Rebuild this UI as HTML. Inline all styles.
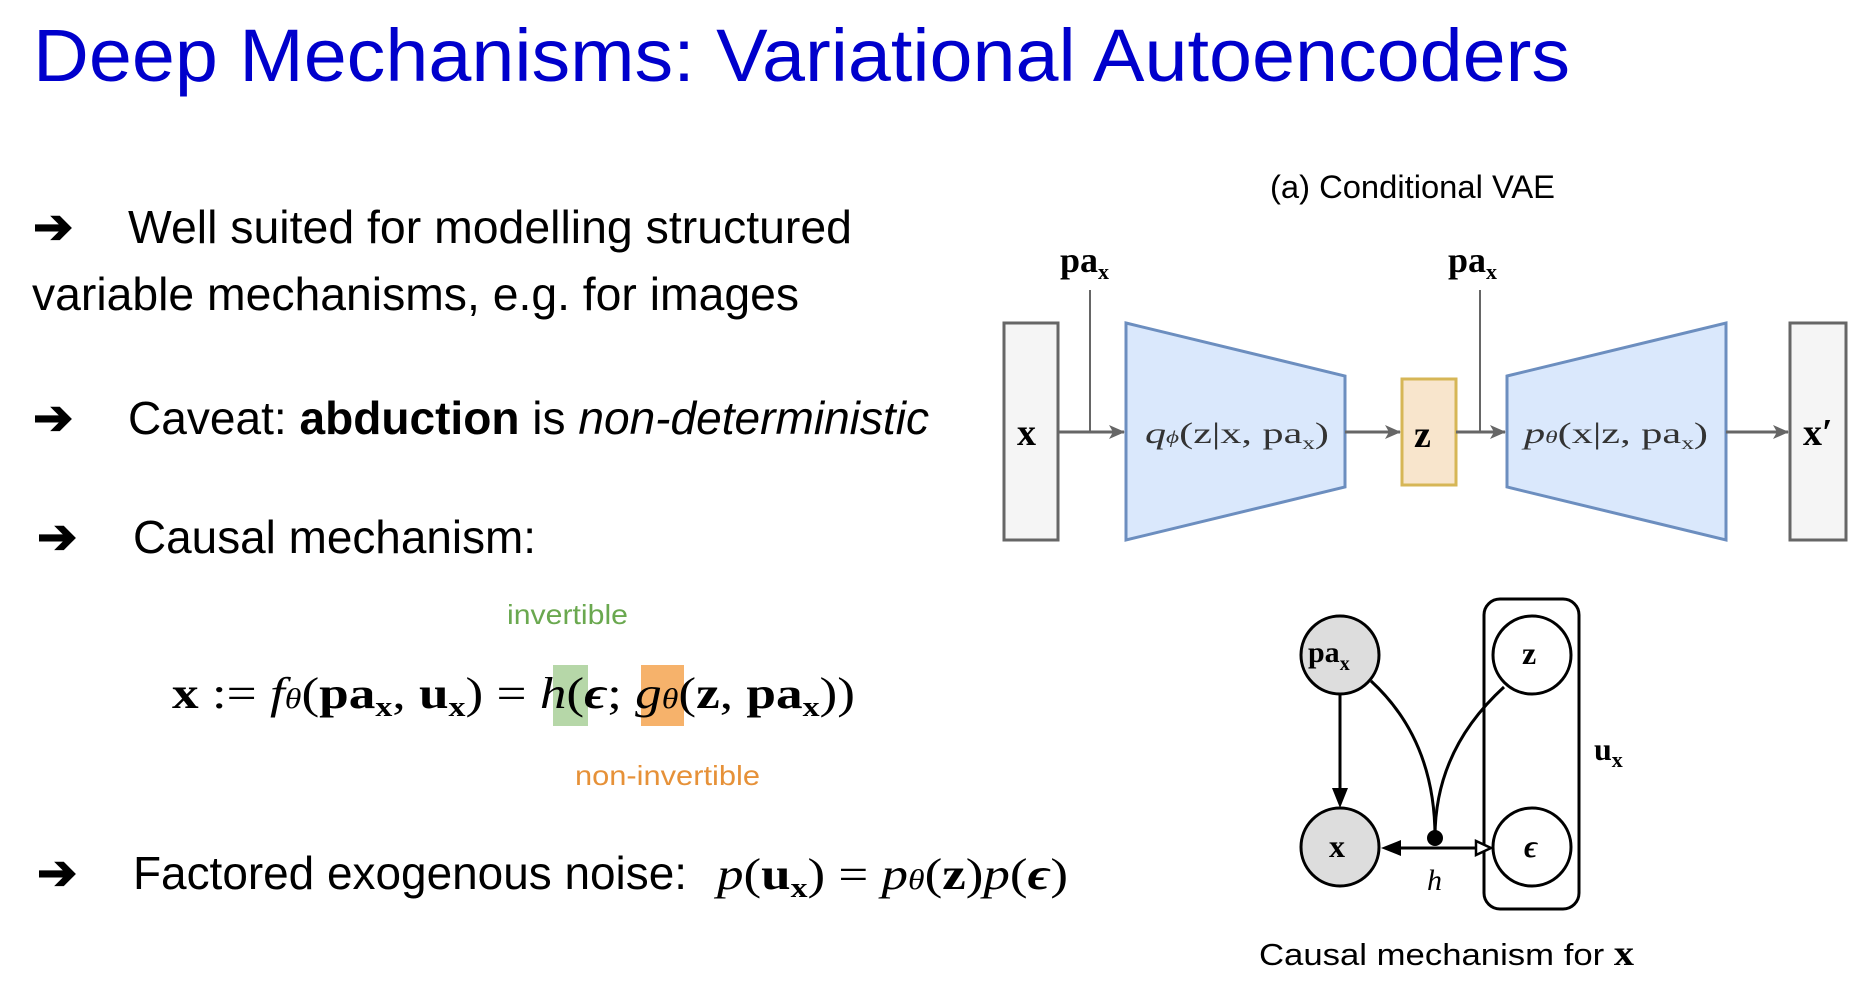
<!DOCTYPE html>
<html><head><meta charset="utf-8"><style>html,body{margin:0;padding:0;background:#fff}svg{display:block}</style></head>
<body>
<svg width="1856" height="990" viewBox="0 0 1856 990" xmlns="http://www.w3.org/2000/svg">
<defs>
<marker id="ag" markerWidth="16" markerHeight="16" refX="15" refY="8" orient="auto" markerUnits="userSpaceOnUse"><path d="M0,1 L16,8 L0,15 L4,8 z" fill="#666"/></marker>
</defs>
<g font-family="Liberation Sans, sans-serif">
<text x="33" y="81" font-size="74" fill="#0000cc" textLength="1537" lengthAdjust="spacingAndGlyphs">Deep Mechanisms: Variational Autoencoders</text>

<g font-size="46" fill="#000">
<text x="33" y="243" font-size="48" font-weight="bold">➔</text>
<text x="128" y="243" textLength="724" lengthAdjust="spacingAndGlyphs">Well suited for modelling structured</text>
<text x="32" y="310" textLength="767" lengthAdjust="spacingAndGlyphs">variable mechanisms, e.g. for images</text>
<text x="33" y="434" font-size="48" font-weight="bold">➔</text>
<text x="128" y="434" textLength="801" lengthAdjust="spacingAndGlyphs">Caveat: <tspan font-weight="bold">abduction</tspan> is <tspan font-style="italic">non-deterministic</tspan></text>
<text x="37" y="553" font-size="48" font-weight="bold">➔</text>
<text x="133" y="553" textLength="403" lengthAdjust="spacingAndGlyphs">Causal mechanism:</text>
<text x="37" y="889" font-size="48" font-weight="bold">➔</text>
<text x="133" y="889" textLength="554" lengthAdjust="spacingAndGlyphs">Factored exogenous noise:</text>
</g>
<text x="507" y="624" font-size="28" fill="#6aa84f" textLength="121" lengthAdjust="spacingAndGlyphs">invertible</text>
<text x="575" y="785" font-size="28" fill="#e69138" textLength="185" lengthAdjust="spacingAndGlyphs">non-invertible</text>
</g>

<rect x="553" y="665" width="35" height="61" fill="#b6d7a8"/>
<rect x="641" y="665" width="43" height="61" fill="#f6b26b"/>
<g font-family="Liberation Serif, serif" font-size="44" fill="#000">
<text x="172" y="708" textLength="683" lengthAdjust="spacingAndGlyphs"><tspan font-weight="bold">x</tspan> := <tspan font-style="italic">f</tspan><tspan font-size="28" font-style="italic">θ</tspan>(<tspan font-weight="bold">pa</tspan><tspan font-weight="bold" font-size="28" dy="8">x</tspan><tspan dy="-8">, </tspan><tspan font-weight="bold">u</tspan><tspan font-weight="bold" font-size="28" dy="8">x</tspan><tspan dy="-8">) = </tspan><tspan font-style="italic">h</tspan>(<tspan font-weight="bold" font-style="italic">ϵ</tspan>; <tspan font-style="italic">g</tspan><tspan font-size="28" font-style="italic">θ</tspan>(<tspan font-weight="bold">z</tspan>, <tspan font-weight="bold">pa</tspan><tspan font-weight="bold" font-size="28" dy="8">x</tspan><tspan dy="-8">))</tspan></text>
<text x="717" y="889" textLength="351" lengthAdjust="spacingAndGlyphs"><tspan font-style="italic">p</tspan>(<tspan font-weight="bold">u</tspan><tspan font-weight="bold" font-size="28" dy="8">x</tspan><tspan dy="-8">) = </tspan><tspan font-style="italic">p</tspan><tspan font-size="28" font-style="italic">θ</tspan>(<tspan font-weight="bold">z</tspan>)<tspan font-style="italic">p</tspan>(<tspan font-weight="bold" font-style="italic">ϵ</tspan>)</text>
</g>

<!-- VAE diagram -->
<text x="1270" y="198" font-family="Liberation Sans, sans-serif" font-size="32" textLength="285" lengthAdjust="spacingAndGlyphs">(a) Conditional VAE</text>
<g stroke-width="3">
<rect x="1004" y="323" width="54" height="217" fill="#f5f5f5" stroke="#666"/>
<rect x="1790" y="323" width="56" height="217" fill="#f5f5f5" stroke="#666"/>
<polygon points="1126,323 1345,376 1345,487 1126,540" fill="#dae8fc" stroke="#6c8ebf"/>
<polygon points="1507,376 1726,323 1726,540 1507,487" fill="#dae8fc" stroke="#6c8ebf"/>
<rect x="1402" y="379" width="54" height="106" fill="#f8e5cc" stroke="#d6b656"/>
<g stroke="#666" fill="none">
<line x1="1058" y1="432" x2="1124" y2="432" marker-end="url(#ag)"/>
<line x1="1345" y1="432" x2="1400" y2="432" marker-end="url(#ag)"/>
<line x1="1456" y1="432" x2="1505" y2="432" marker-end="url(#ag)"/>
<line x1="1726" y1="432" x2="1788" y2="432" marker-end="url(#ag)"/>
<line x1="1090" y1="290" x2="1090" y2="432" stroke-width="2"/>
<line x1="1480" y1="290" x2="1480" y2="432" stroke-width="2"/>
</g>
</g>
<g font-family="Liberation Serif, serif" fill="#000">
<text x="1060" y="272" font-size="36" font-weight="bold">pa<tspan font-size="22" dy="7">x</tspan></text>
<text x="1448" y="272" font-size="36" font-weight="bold">pa<tspan font-size="22" dy="7">x</tspan></text>
<text x="1017" y="445" font-size="38" font-weight="bold">x</text>
<text x="1803" y="445" font-size="38" font-weight="bold">x′</text>
<text x="1414" y="447" font-size="38" font-weight="bold">z</text>
<text x="1145" y="443" font-size="30" fill="#333" textLength="184" lengthAdjust="spacingAndGlyphs"><tspan font-style="italic">q</tspan><tspan font-size="18" font-style="italic">ϕ</tspan>(z|x, pa<tspan font-size="18" dy="6">x</tspan><tspan dy="-6">)</tspan></text>
<text x="1524" y="443" font-size="30" fill="#333" textLength="184" lengthAdjust="spacingAndGlyphs"><tspan font-style="italic">p</tspan><tspan font-size="18" font-style="italic">θ</tspan>(x|z, pa<tspan font-size="18" dy="6">x</tspan><tspan dy="-6">)</tspan></text>
</g>

<!-- causal graph -->
<g stroke="#000" stroke-width="3" fill="none">
<rect x="1484" y="599" width="95" height="310" rx="16"/>
<circle cx="1340" cy="655" r="39" fill="#ddd"/>
<circle cx="1340" cy="847" r="39" fill="#ddd"/>
<circle cx="1532" cy="655" r="39" fill="#fff"/>
<circle cx="1532" cy="847" r="39" fill="#fff"/>
<line x1="1340" y1="694" x2="1340" y2="790"/>
<path d="M1371,681 Q1435,740 1435,837"/>
<path d="M1504,687 Q1435,750 1435,837"/>
<line x1="1395" y1="848" x2="1478" y2="848"/>
</g>
<polygon points="1340,808 1332,788 1348,788" fill="#000"/>
<polygon points="1381,848 1401,840 1401,856" fill="#000"/>
<polygon points="1491,848 1476,841 1476,855" fill="#fff" stroke="#000" stroke-width="2.5"/>
<circle cx="1435" cy="838" r="8" fill="#000"/>
<g font-family="Liberation Serif, serif" fill="#000" font-weight="bold">
<text x="1308" y="662" font-size="30">pa<tspan font-size="20" dy="8">x</tspan></text>
<text x="1329" y="857" font-size="32">x</text>
<text x="1522" y="664" font-size="32">z</text>
<text x="1524" y="857" font-size="32" font-style="italic">ϵ</text>
<text x="1594" y="760" font-size="32">u<tspan font-size="22" dy="7">x</tspan></text>
<text x="1427" y="890" font-size="30" font-weight="normal" font-style="italic">h</text>
</g>
<text x="1259" y="965" font-family="Liberation Sans, sans-serif" font-size="31" textLength="375" lengthAdjust="spacingAndGlyphs">Causal mechanism for <tspan font-family="Liberation Serif, serif" font-weight="bold" font-size="36">x</tspan></text>
</svg>
</body></html>
